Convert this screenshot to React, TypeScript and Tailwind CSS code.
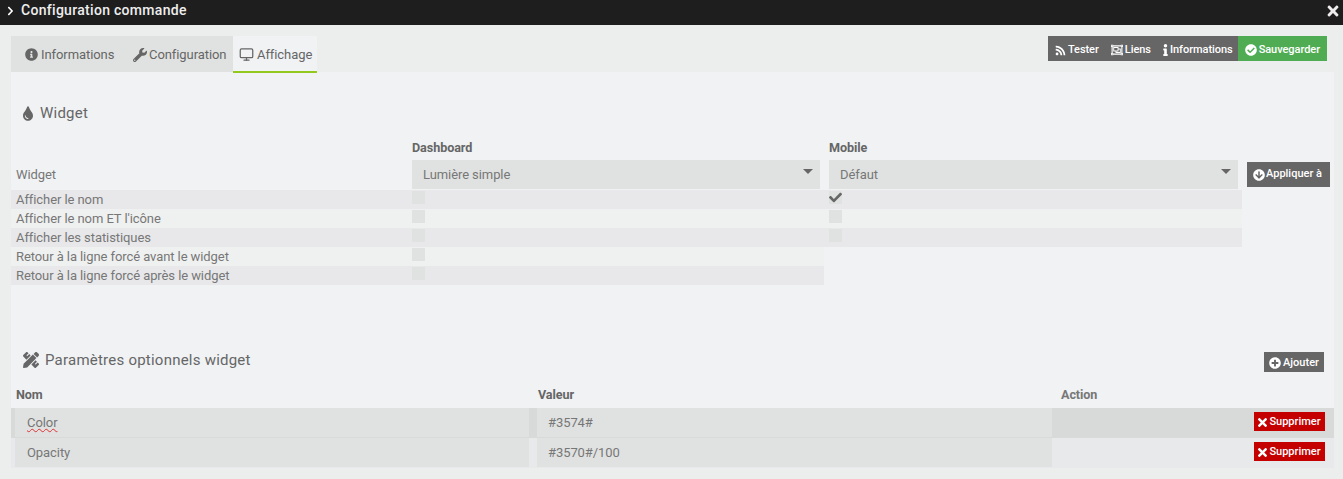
import React from 'react';
import {
  FaChevronRight, FaTimes, FaInfoCircle, FaWrench, FaRss, FaInfo, FaCheckCircle, FaTint,
  FaArrowCircleDown, FaCheck, FaPencilRuler, FaPlusCircle, FaRegObjectGroup,
} from 'react-icons/fa';
import { Monitor } from 'lucide-react';

const options = [
  { label: 'Afficher le nom', mobile: 'checked', band: true },
  { label: "Afficher le nom ET l'icône", mobile: 'box', band: false },
  { label: 'Afficher les statistiques', mobile: 'box', band: true },
  { label: 'Retour à la ligne forcé avant le widget', mobile: 'none', band: false },
  { label: 'Retour à la ligne forcé après le widget', mobile: 'none', band: true },
];

const params = [
  { name: 'Color', value: '#3574#', dark: true },
  { name: 'Opacity', value: '#3570#/100', dark: false },
];

function Select({ value, className }: { value: string; className: string }) {
  return (
    <div className={`relative flex h-[29px] items-center bg-[#e0e2e1] pl-[11px] text-[13px] text-[#777] ${className}`}>
      {value}
      <span className="absolute right-[7px] top-[9px] h-0 w-0 border-x-[5px] border-t-[5px] border-x-transparent border-t-[#666]" />
    </div>
  );
}

export default function App() {
  return (
    <div className="h-[479px] w-[1343px] overflow-hidden bg-[#eceeee] font-['Roboto',sans-serif] text-[13px] tracking-[-0.08px] text-[#666]">
      <header className="flex h-[25px] items-center justify-between bg-[#1e1e1e] pb-[3px] pl-[7px] pr-[4px] text-white">
        <div className="flex items-center gap-[7px] pb-[1px]">
          <FaChevronRight className="w-[7px] text-[10px]" />
          <span className="text-[14px] font-medium tracking-[0.3px] text-[#eee]">Configuration commande</span>
        </div>
        <FaTimes className="w-[12px] text-[16px] text-[#eee]" />
      </header>

      <main className="mx-[11px] mt-[11px] w-[1323px] bg-[#f0f2f4]">
        <div className="relative flex h-[36px] bg-[#eceeee]">
          <div className="flex bg-[#e0e2e1] pt-[1px]">
            <div className="flex w-[116px] items-center gap-[3px] pl-[14px]">
              <FaInfoCircle className="text-[13px]" />
              Informations
            </div>
            <div className="flex w-[106px] items-center gap-[2px] pl-[6px]">
              <FaWrench className="text-[14px]" />
              Configuration
            </div>
          </div>
          <div className="flex h-[37px] w-[84px] items-center gap-[3px] border-b-2 border-[#93c91c] bg-[#f0f2f4] pl-[6px] pt-[2px]">
            <Monitor size={15} strokeWidth={2} />
            Affichage
          </div>
          <div className="absolute right-[7px] top-0 flex h-[25px] text-[11px] font-medium tracking-[-0.05px] text-white">
            <div className="flex items-center gap-[12px] bg-[#666] pl-[7px] pr-[5px] pt-[3px]">
              <span className="flex items-center gap-[2px]"><FaRss className="text-[11px]" />Tester</span>
              <span className="flex items-center gap-[2px]"><FaRegObjectGroup className="text-[12px]" />Liens</span>
              <span className="flex items-center gap-[2px]"><FaInfo className="w-[5px] text-[12px]" />Informations</span>
            </div>
            <div className="flex items-center gap-[2px] bg-[#4fac53] px-[7px] pt-[3px]">
              <FaCheckCircle className="text-[12px]" />
              Sauvegarder
            </div>
          </div>
        </div>

        <section className="pt-[31px]">
          <h3 className="flex h-[20px] items-center gap-[7px] pl-[12px] text-[15px] tracking-[0.23px] text-[#666]">
            <FaTint className="w-[10px] text-[15px]" />
            Widget
          </h3>

          <div className="mb-[2px] mt-[15px] grid h-[20px] grid-cols-[401px_417px_1fr] items-center text-[12.6px] font-bold">
            <span />
            <span>Dashboard</span>
            <span>Mobile</span>
          </div>

          <div className="grid h-[30px] grid-cols-[401px_417px_418px_1fr] items-start">
            <span className="flex h-[29px] items-center pl-[5px] text-[#777]">Widget</span>
            <Select value="Lumière simple" className="w-[408px]" />
            <Select value="Défaut" className="w-[409px]" />
            <div className="mt-[2px] flex h-[25px] w-[83px] items-center gap-[1px] bg-[#666] pl-[6px] text-[11px] font-medium tracking-normal text-white">
              <FaArrowCircleDown className="text-[12px]" />
              Appliquer à
            </div>
          </div>

          {options.map((o) => (
            <div key={o.label} className="flex h-[19px] text-[#777]">
              <div className={`flex w-[813px] ${o.band ? 'bg-[#e8e8ea]' : 'bg-[#eff1f0]'}`}>
                <span className="w-[401px] pl-[5px] leading-[19px]">{o.label}</span>
                <span className="mt-[1px] h-[13px] w-[13px] bg-[#e0e2e1]" />
              </div>
              {o.mobile !== 'none' && (
                <div className={`w-[418px] pl-[5px] ${o.band ? 'bg-[#e8e8ea]' : 'bg-[#eff1f0]'}`}>
                  <span className="relative mt-[1px] block h-[13px] w-[13px] bg-[#e0e2e1]">
                    {o.mobile === 'checked' && <FaCheck className="absolute left-0 top-0 text-[13px] text-[#666]" />}
                  </span>
                </div>
              )}
            </div>
          ))}
        </section>

        <section className="pt-[67px]">
          <div className="flex h-[20px] items-center justify-between pl-[12px] pr-[10px]">
            <h3 className="flex items-center gap-[6px] pb-[4px] text-[15px] tracking-[0.23px]">
              <FaPencilRuler className="text-[16px]" />
              Paramètres optionnels widget
            </h3>
            <div className="flex h-[20px] w-[60px] items-center justify-center gap-[2px] bg-[#666] pt-[2px] text-[11px] font-medium tracking-normal text-white">
              <FaPlusCircle className="text-[12px]" />
              Ajouter
            </div>
          </div>

          <div className="mt-[13px] grid h-[23px] grid-cols-[522px_523px_1fr] items-center pb-[2px] pl-[5px] text-[12.6px] font-bold">
            <span>Nom</span>
            <span>Valeur</span>
            <span className="text-[#777]">Action</span>
          </div>

          {params.map((p) => (
            <div key={p.name} className={`flex h-[30px] items-start ${p.dark ? 'bg-[#d8dad9]' : 'bg-[#e8e9ea]'}`}>
              <div className="ml-[4px] flex h-[29px] w-[514px] items-center bg-[#e0e2e1] pl-[12px] text-[#777]">
                {p.dark ? <span className="underline decoration-wavy decoration-[#e03030] decoration-[1px] underline-offset-1">{p.name}</span> : p.name}
              </div>
              <div className="ml-[8px] flex h-[29px] w-[515px] items-center bg-[#e0e2e1] pl-[11px] text-[#777]">{p.value}</div>
              <div className="ml-auto mr-[9px] mt-[4px] flex h-[19px] w-[71px] items-center justify-center gap-[2px] bg-[#c40000] pt-[1px] text-[11px] font-medium tracking-normal text-white">
                <FaTimes className="w-[9px] text-[13px]" />
                Supprimer
              </div>
            </div>
          ))}
        </section>
      </main>
    </div>
  );
}
